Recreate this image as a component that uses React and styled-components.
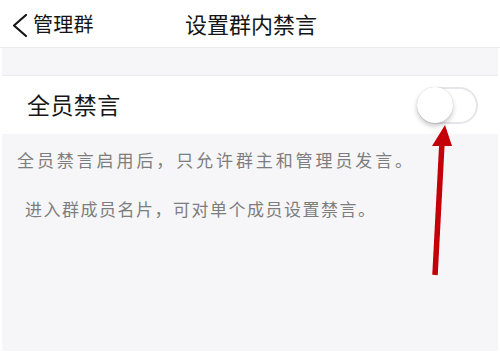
import styled, { createGlobalStyle } from 'styled-components';

const GlobalStyle = createGlobalStyle`
  html, body {
    margin: 0;
    padding: 0;
    background: #ffffff;
  }
  body {
    font-family: "Noto Sans CJK SC", "Noto Sans", sans-serif;
  }
`;

const Screen = styled.div`
  position: relative;
  width: 500px;
  height: 352px;
  box-sizing: border-box;
  padding: 0 2px 1px;
  display: flex;
  flex-direction: column;
  background: #ffffff;
  overflow: hidden;
`;

const NavBar = styled.div`
  position: relative;
  height: 48px;
  flex: none;
  display: flex;
  align-items: center;
  justify-content: center;
  border-bottom: 1px solid #ececef;
  box-sizing: border-box;
  margin: 0 -2px;
`;

const BackButton = styled.div`
  position: absolute;
  left: 11px;
  top: 0;
  height: 46px;
  display: flex;
  align-items: center;
  gap: 5px;
  font-size: 20px;
  color: #151515;
  letter-spacing: 0.3px;
`;

const Chevron = styled.svg`
  margin-top: 5px;
  flex: none;
`;

const Title = styled.div`
  font-size: 22px;
  color: #151515;
  padding-left: 2px;
  margin-top: -2px;
`;

const Spacer = styled.div`
  height: 28px;
  flex: none;
  background: #f6f6f8;
  border-bottom: 1px solid #ececef;
  box-sizing: border-box;
`;

const Row = styled.div`
  height: 58px;
  flex: none;
  display: flex;
  align-items: center;
  justify-content: space-between;
  padding: 0 20px 0 25px;
  background: #ffffff;
`;

const RowLabel = styled.div`
  font-size: 23px;
  color: #161616;
  letter-spacing: 0.4px;
  margin-top: -2px;
`;

const Switch = styled.div`
  position: relative;
  width: 61px;
  height: 37px;
  box-sizing: border-box;
  border-radius: 19px;
  border: 2px solid #e6e6ea;
  background: #ffffff;
`;

const Knob = styled.div`
  position: absolute;
  left: -2px;
  top: -2px;
  width: 36px;
  height: 36px;
  border-radius: 50%;
  background: #ffffff;
  box-shadow: 0 3px 5px rgba(0, 0, 0, 0.22), 0 0 1px rgba(0, 0, 0, 0.2);
`;

const Notes = styled.div`
  flex: 1;
  background: #f6f6f8;
  display: flex;
  flex-direction: column;
  padding-top: 14px;
  gap: 25px;
`;

const Note = styled.div`
  font-size: 17px;
  line-height: 24px;
  color: #7d7d7d;
  padding-left: ${(p) => p.$indent}px;
  letter-spacing: ${(p) => p.$spacing}px;
  white-space: nowrap;
`;

const Arrow = styled.svg`
  position: absolute;
  left: 0;
  top: 0;
  pointer-events: none;
`;

export default function App() {
  return (
    <>
      <GlobalStyle />
      <Screen>
        <NavBar>
          <BackButton>
            <Chevron width="17" height="26" viewBox="0 0 17 26">
              <path d="M15 2 L3 12.5 L15 23" fill="none" stroke="#151515" strokeWidth="2.2" strokeLinecap="round" strokeLinejoin="round" />
            </Chevron>
            管理群
          </BackButton>
          <Title>设置群内禁言</Title>
        </NavBar>
        <Spacer />
        <Row>
          <RowLabel>全员禁言</RowLabel>
          <Switch>
            <Knob />
          </Switch>
        </Row>
        <Notes>
          <Note $indent={15} $spacing={2.9}>全员禁言启用后，只允许群主和管理员发言。</Note>
          <Note $indent={23} $spacing={1.5}>进入群成员名片，可对单个成员设置禁言。</Note>
        </Notes>
        <Arrow width="500" height="352" viewBox="0 0 500 352">
          <line x1="435" y1="275" x2="442" y2="142" stroke="#c40009" strokeWidth="5.5" />
          <polygon points="445,125 432,146 452,146" fill="#c40009" />
        </Arrow>
      </Screen>
    </>
  );
}
